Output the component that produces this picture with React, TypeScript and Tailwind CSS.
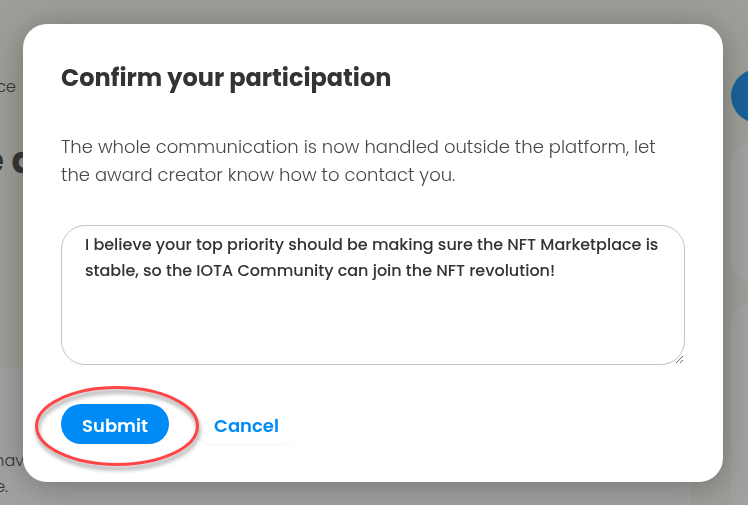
function BackgroundPage() {
  return (
    <div aria-hidden="true" className="flex h-screen gap-10 overflow-hidden bg-[#f7f9ec]">
      <div className="flex grow flex-col">
        <div className="flex h-[368px] shrink-0 flex-col pt-[73px]">
          <p className="flex w-4 justify-end text-base leading-7 font-light">ce</p>
          <p className="mt-10 flex w-9 justify-end text-4xl font-bold whitespace-nowrap">e a</p>
        </div>
        <div className="grow bg-white pt-20 text-base leading-[26px] font-light">
          <p className="flex w-6 justify-end">hav</p>
          <p className="flex w-2 justify-end">e.</p>
        </div>
      </div>
      <div className="flex w-[17px] shrink-0 flex-col overflow-hidden pt-[69px]">
        <div className="h-[54px] w-40 shrink-0 rounded-full bg-[#008af5]" />
        <div className="mt-[18px] h-[143px] w-60 shrink-0 rounded-3xl bg-white" />
        <div className="mt-[18px] w-60 grow rounded-t-3xl bg-white" />
      </div>
    </div>
  );
}

function SubmitHighlight() {
  return (
    <svg
      aria-hidden="true"
      className="pointer-events-none absolute -top-5 -left-7 overflow-visible"
      width="166"
      height="84"
      viewBox="0 0 166 84"
      fill="none"
    >
      <ellipse
        cx="84"
        cy="42"
        rx="80.5"
        ry="38.5"
        stroke="#ff4545"
        strokeWidth="3"
        className="drop-shadow-[1px_4px_2px_rgba(0,0,0,0.4)]"
      />
    </svg>
  );
}

export default function App() {
  return (
    <div className="font-['Poppins','Inter',sans-serif] text-[#333333]">
      <BackgroundPage />
      <div className="fixed inset-0 overflow-hidden bg-[rgba(51,51,51,0.46)] pt-6 pr-[25px] pl-[23px]">
        <form
          role="dialog"
          aria-modal="true"
          aria-labelledby="dialog-title"
          onSubmit={(event) => event.preventDefault()}
          className="rounded-3xl bg-white px-[38px] pt-9 pb-[38px] shadow-[0_4px_32px_rgba(51,51,51,0.4)]"
        >
          <h1 id="dialog-title" className="text-2xl leading-9 font-bold">
            Confirm your participation
          </h1>
          <label
            htmlFor="message"
            className="mt-[37px] block text-lg leading-7 font-light text-[#484848]"
          >
            The whole communication is now handled outside the platform, let the award creator know
            how to contact you.
          </label>
          <textarea
            id="message"
            className="mt-9 block h-[140px] w-full resize rounded-3xl border border-[#c6c6b8] px-[23px] py-[6px] text-base leading-[26px] font-medium outline-none"
            defaultValue="I believe your top priority should be making sure the NFT Marketplace is stable, so the IOTA Community can join the NFT revolution!"
          />
          <div className="mt-[39px] flex gap-6 text-lg font-semibold">
            <div className="relative">
              <button type="submit" className="h-10 w-[108px] rounded-full bg-[#008af5] pt-1 text-white">
                Submit
              </button>
              <SubmitHighlight />
            </div>
            <button
              type="button"
              className="h-10 w-[107px] rounded-full pt-1 text-[#008af5] shadow-[0_2px_1px_rgba(0,0,0,0.02)]"
            >
              Cancel
            </button>
          </div>
        </form>
      </div>
    </div>
  );
}
